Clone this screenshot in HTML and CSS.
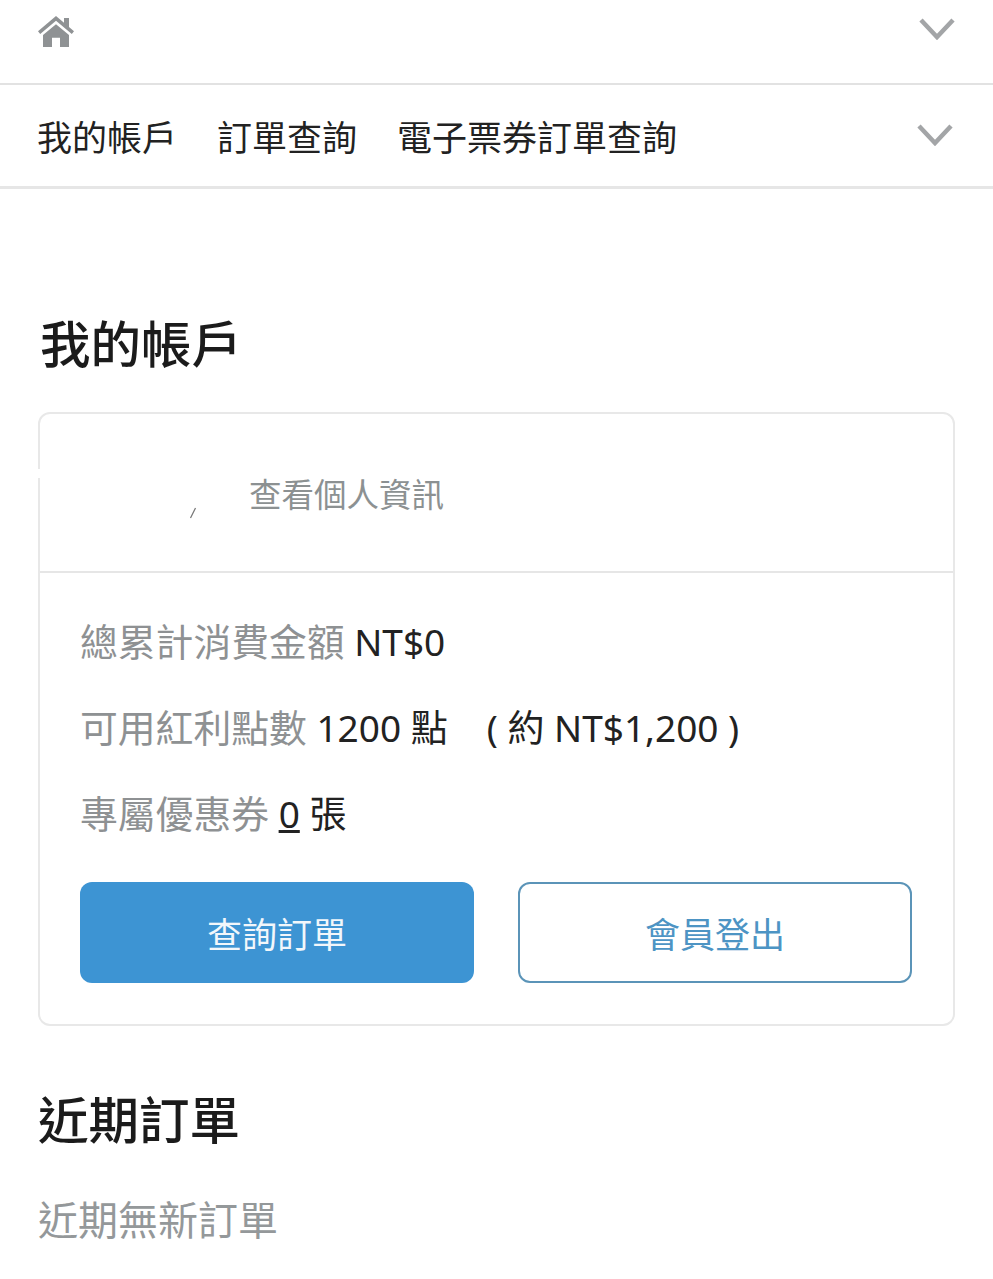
FILE: index.html
```html
<!DOCTYPE html>
<html lang="zh-Hant">
<head>
    <meta charset="UTF-8">
    <meta name="viewport" content="width=device-width, initial-scale=1.0">
    <title>我的帳戶</title>
    <link rel="stylesheet" href="styles.css">
</head>
<body>

    <!-- Breadcrumb bar -->
    <div class="top-bar">
        <svg class="home-icon" viewBox="0 0 36 30" preserveAspectRatio="none" aria-label="首頁">
            <path d="M18 0 L26 6.5 V2 H31 V10.6 L36 14.7 L33.8 17.3 L18 4.6 L2.2 17.3 L0 14.7 Z"/>
            <path d="M18 8 L31 18.5 V30 H22 V21 H14 V30 H5 V18.5 Z"/>
        </svg>
        <svg class="chevron" viewBox="0 0 36 22"><path d="M2 2 L18 19 L34 2"/></svg>
    </div>

    <!-- Account nav -->
    <nav class="nav-bar">
        <div class="nav-links">
            <a href="#">我的帳戶</a>
            <a href="#">訂單查詢</a>
            <a href="#">電子票券訂單查詢</a>
        </div>
        <svg class="chevron" viewBox="0 0 36 22"><path d="M2 2 L18 19 L34 2"/></svg>
    </nav>

    <main class="content">
        <h1 class="page-title">我的帳戶</h1>

        <section class="account-card">
            <div class="card-head">
                <svg class="name-speck" viewBox="0 0 8 12"><path d="M6.5 1 L1.5 11"/></svg>
                <a class="profile-link" href="#">查看個人資訊</a>
            </div>
            <div class="card-body">
                <p class="stat"><span class="stat-label">總累計消費金額</span> NT$0</p>
                <p class="stat"><span class="stat-label">可用紅利點數</span> 1200 點<span class="stat-note">( 約 NT$1,200 )</span></p>
                <p class="stat"><span class="stat-label">專屬優惠券</span> <u>0</u> 張</p>
                <div class="card-actions">
                    <a class="btn btn-primary" href="#">查詢訂單</a>
                    <a class="btn btn-outline" href="#">會員登出</a>
                </div>
            </div>
        </section>

        <h2 class="section-title">近期訂單</h2>
        <p class="empty-note">近期無新訂單</p>
    </main>

</body>
</html>
```

FILE: styles.css
```css
/* Reset */
* {
    box-sizing: border-box;
    margin: 0;
    padding: 0;
}

html, body {
    width: 100%;
    height: 100%;
    overflow: hidden;
    background-color: #fff;
    color: #222;
    font-family: "Noto Sans", "Noto Sans CJK TC", sans-serif;
}

a {
    color: inherit;
    text-decoration: none;
}

/* Top bars */
.top-bar {
    height: 85px;
    padding: 16px 38px 0 38px;
    display: flex;
    justify-content: space-between;
    align-items: flex-start;
    border-bottom: 2px solid #e2e2e2;
}

.home-icon {
    width: 36px;
    height: 31px;
    fill: #8f9294;
}

.chevron {
    width: 36px;
    height: 22px;
    margin-top: 2px;
    fill: none;
    stroke: #a3a5a7;
    stroke-width: 4.5;
}

.nav-bar {
    height: 104px;
    padding: 0 40px 0 37px;
    display: flex;
    justify-content: space-between;
    align-items: center;
    border-bottom: 3px solid #e6e6e6;
}

.nav-bar .chevron {
    margin-top: -2px;
}

.nav-links {
    display: flex;
    gap: 40px;
    padding-top: 4px;
    font-size: 35px;
    line-height: 50px;
    color: #222;
}

/* Main column */
.content {
    padding: 0 38px;
}

.page-title {
    margin: 125px 0 38px 2px;
    font-size: 50.5px;
    line-height: 60px;
    font-weight: 500;
    color: #1b1b1b;
}

.account-card {
    height: 614px;
    border: 2px solid #e8e8e8;
    border-radius: 12px;
    position: relative;
}

/* small gap in the card's left edge */
.account-card::before {
    content: "";
    position: absolute;
    left: -2px;
    top: 55px;
    width: 2px;
    height: 9px;
    background-color: #fff;
}

.card-head {
    height: 159px;
    padding: 53px 0 0 209px;
    border-bottom: 2px solid #e6e6e6;
    position: relative;
}

.name-speck {
    position: absolute;
    left: 149px;
    top: 93px;
    width: 8px;
    height: 12px;
    fill: none;
    stroke: #777;
    stroke-width: 1.2;
}

.profile-link {
    font-size: 32.5px;
    line-height: 56px;
    color: #8c9192;
}

.card-body {
    padding: 41px 41px 0 40px;
}

.stat {
    height: 86px;
    font-size: 37px;
    line-height: 56px;
    color: #222;
}

.stat-label {
    font-size: 37.8px;
    color: #8e9193;
}

.stat-note {
    margin-left: 39px;
}

.card-actions {
    margin-top: 10px;
    display: grid;
    grid-template-columns: 1fr 1fr;
    gap: 44px;
}

.btn {
    height: 101px;
    display: flex;
    align-items: center;
    justify-content: center;
    font-size: 35px;
    border-radius: 12px;
}

.btn-primary {
    background-color: #3d94d3;
    color: #f2f7fb;
}

.btn-outline {
    border: 2px solid #5b94b8;
    color: #4d94c4;
    background-color: #fff;
}

/* Recent orders */
.section-title {
    margin-top: 59px;
    font-size: 50.5px;
    line-height: 70px;
    font-weight: 500;
    color: #1b1b1b;
}

.empty-note {
    margin-top: 37px;
    font-size: 40px;
    line-height: 56px;
    color: #94989a;
}
```
